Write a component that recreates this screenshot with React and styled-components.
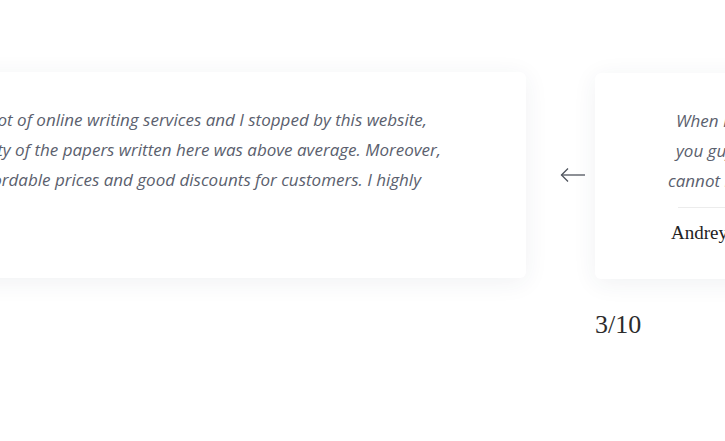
import React from "react";
import styled, { createGlobalStyle } from "styled-components";

const Global = createGlobalStyle`
  html, body { margin: 0; padding: 0; background: #ffffff; }
  body { width: 725px; height: 441px; overflow: hidden; }
`;

const Section = styled.section`
  width: 725px;
  height: 441px;
  overflow: hidden;
  padding-top: 72px;
  box-sizing: border-box;
`;

const Track = styled.div`
  display: flex;
  align-items: flex-start;
  margin-left: ${(p) => p.$offset}px;
  width: max-content;
`;

const Card = styled.article`
  width: 680px;
  height: 206px;
  box-sizing: border-box;
  flex-shrink: 0;
  background: #fff;
  border-radius: 6px;
  box-shadow: 0 4px 24px rgba(40, 50, 80, 0.07);
  padding: 33px 0 0;
  display: flex;
  flex-direction: column;
  margin-top: ${(p) => p.$top || 0}px;
`;

const Quote = styled.div`
  font-family: "Open Sans", "Noto Sans", sans-serif;
  font-style: italic;
  font-size: 17px;
  line-height: 30px;
  color: #5b5f6e;
  white-space: nowrap;
`;

const QuoteLine = styled.div`
  text-align: ${(p) => (p.$end ? "right" : "left")};
  padding-left: ${(p) => (p.$end ? 0 : p.$inset)}px;
  padding-right: ${(p) => (p.$end ? p.$inset : 0)}px;
`;

const Divider = styled.hr`
  border: 0;
  border-top: 1px solid #ececec;
  margin: 11px 0 0 83px;
`;

const Author = styled.div`
  margin: 13px 0 0 76px;
  font-family: "Liberation Serif", serif;
  font-size: 19px;
  line-height: 24px;
  color: #222;
`;

const ArrowSlot = styled.div`
  width: 69px;
  height: 206px;
  flex-shrink: 0;
  display: flex;
  align-items: center;
  justify-content: flex-end;
  padding-right: 9px;
  box-sizing: border-box;
  color: #4f545d;
`;

const Counter = styled.div`
  margin-top: 31px;
  padding-left: 595px;
  font-family: "Liberation Serif", serif;
  font-size: 26px;
  line-height: 30px;
  color: #2b2b2b;
`;

const Arrow = () => (
  <svg width="26" height="16" viewBox="0 0 26 16" fill="none">
    <path d="M25 8H1.5" stroke="currentColor" strokeWidth="1.3" />
    <path d="M8 1.5L1.5 8L8 14.5" stroke="currentColor" strokeWidth="1.3" />
  </svg>
);

export default function App() {
  return (
    <>
      <Global />
      <Section>
        <Track $offset={-154}>
          <Card>
            <Quote>
              <QuoteLine $end $inset={99}>
                I have tried a lot of online writing services and I stopped by this website,
              </QuoteLine>
              <QuoteLine $end $inset={85}>
                because the quality of the papers written here was above average. Moreover,
              </QuoteLine>
              <QuoteLine $end $inset={105}>
                they offer affordable prices and good discounts for customers. I highly
              </QuoteLine>
            </Quote>
          </Card>
          <ArrowSlot>
            <Arrow />
          </ArrowSlot>
          <Card $top={1}>
            <Quote>
              <QuoteLine $inset={81}>When I needed help with my coursework, I turned to</QuoteLine>
              <QuoteLine $inset={81}>you guys and got a great paper in just a few days. I</QuoteLine>
              <QuoteLine $inset={73}>cannot imagine how I would have managed without you.</QuoteLine>
            </Quote>
            <Divider />
            <Author>Andrey Smirnov</Author>
          </Card>
        </Track>
        <Counter>3/10</Counter>
      </Section>
    </>
  );
}
